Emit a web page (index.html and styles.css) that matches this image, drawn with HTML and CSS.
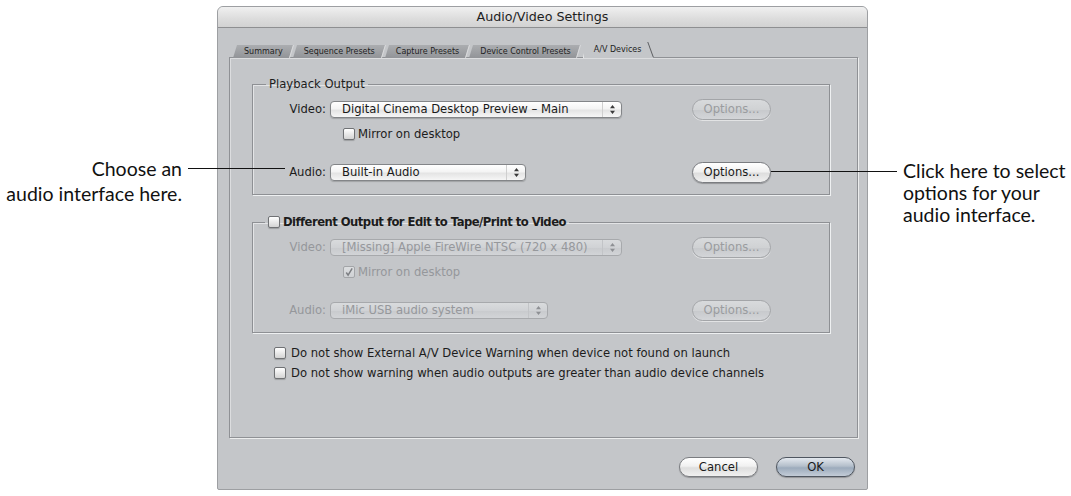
FILE: index.html
```html
<!DOCTYPE html>
<html lang="en">
<head>
<meta charset="utf-8">
<title>Audio/Video Settings</title>
<link rel="stylesheet" href="styles.css">
</head>
<body>
<div class="stage">
  <div class="window">
    <div class="titlebar">Audio/Video Settings</div>
    <div class="tabs">
      <div class="tab">Summary</div>
      <div class="tab">Sequence Presets</div>
      <div class="tab">Capture Presets</div>
      <div class="tab">Device Control Presets</div>
      <div class="tab active">A/V Devices</div>
    </div>
    <div class="pane">
      <fieldset class="group">
        <legend class="legend">Playback Output</legend>
        <div class="row">
          <span class="label">Video:</span>
          <div class="cell">
            <div class="popup w-video"><span class="popup-text">Digital Cinema Desktop Preview – Main</span><span class="stepper"><svg width="7" height="11" viewBox="0 0 7 11"><path d="M3.5 1 L6 4.2 H1Z M3.5 10 L6 6.8 H1Z" fill="#3a3a3a"/></svg></span></div>
          </div>
          <button class="btn opt disabled">Options...</button>
        </div>
        <div class="row row-check">
          <span></span>
          <div class="cell"><span class="check"><span class="box"></span>Mirror on desktop</span></div>
        </div>
        <div class="row row-last">
          <span class="label">Audio:</span>
          <div class="cell">
            <div class="popup w-audio"><span class="popup-text">Built-in Audio</span><span class="stepper"><svg width="7" height="11" viewBox="0 0 7 11"><path d="M3.5 1 L6 4.2 H1Z M3.5 10 L6 6.8 H1Z" fill="#3a3a3a"/></svg></span></div>
          </div>
          <button class="btn opt">Options...</button>
        </div>
      </fieldset>

      <fieldset class="group group-2">
        <legend class="legend legend-check"><span class="box"></span><span class="bold">Different Output for Edit to Tape/Print to Video</span></legend>
        <div class="row dim">
          <span class="label">Video:</span>
          <div class="cell">
            <div class="popup w-video off"><span class="popup-text">[Missing] Apple FireWire NTSC (720 x 480)</span><span class="stepper"><svg width="7" height="11" viewBox="0 0 7 11"><path d="M3.5 1 L6 4.2 H1Z M3.5 10 L6 6.8 H1Z" fill="#8e9094"/></svg></span></div>
          </div>
          <button class="btn opt disabled">Options...</button>
        </div>
        <div class="row row-check dim">
          <span></span>
          <div class="cell"><span class="check"><span class="box checked"><svg width="11" height="11" viewBox="0 0 11 11"><path d="M2.5 5.5 L4.5 8.5 L9 1" fill="none" stroke="#7c7e82" stroke-width="1.6"/></svg></span>Mirror on desktop</span></div>
        </div>
        <div class="row row-last dim">
          <span class="label">Audio:</span>
          <div class="cell">
            <div class="popup w-imic off"><span class="popup-text">iMic USB audio system</span><span class="stepper"><svg width="7" height="11" viewBox="0 0 7 11"><path d="M3.5 1 L6 4.2 H1Z M3.5 10 L6 6.8 H1Z" fill="#8e9094"/></svg></span></div>
          </div>
          <button class="btn opt disabled">Options...</button>
        </div>
      </fieldset>

      <div class="checks">
        <span class="check"><span class="box"></span>Do not show External A/V Device Warning when device not found on launch</span>
        <span class="check"><span class="box"></span>Do not show warning when audio outputs are greater than audio device channels</span>
      </div>
    </div>
    <div class="actions">
      <button class="btn pill">Cancel</button>
      <button class="btn pill default">OK</button>
    </div>
  </div>

  <div class="callout callout-left">Choose an<br>audio interface here.</div>
  <div class="leader leader-left"></div>
  <div class="callout callout-right">Click here to select<br>options for your<br>audio interface.</div>
  <div class="leader leader-right"></div>
</div>
</body>
</html>
```

FILE: styles.css
```css
* { box-sizing: border-box; }

html, body {
  margin: 0;
  padding: 0;
  background: #ffffff;
}

.stage {
  position: relative;
  width: 1071px;
  height: 496px;
  overflow: hidden;
  padding-top: 6px;
  font-family: "DejaVu Sans", "Liberation Sans", sans-serif;
  font-size: 11.6px;
  color: #1c1c1c;
}

/* ---------- window ---------- */
.window {
  margin-left: 217px;
  width: 651px;
  height: 484px;
  border: 1px solid #9d9fa2;
  border-radius: 6px 6px 2px 2px;
  background: #c4c6c9;
  display: flex;
  flex-direction: column;
  overflow: hidden;
}

.titlebar {
  height: 21px;
  line-height: 20px;
  border-bottom: 1px solid #8e8f91;
  background: linear-gradient(#f0f0f0, #dcdcdc 60%, #d2d2d2);
  text-align: center;
  font-size: 12.7px;
  color: #1e1e1e;
}

/* ---------- tabs ---------- */
.tabs {
  position: relative;
  z-index: 2;
  display: flex;
  align-items: flex-end;
  gap: 3px;
  height: 16px;
  margin: 14px 0 0 17px;
}

.tab {
  position: relative;
  height: 13px;
  line-height: 13px;
  padding: 0 9px;
  font-size: 8px;
  color: #1f1f1f;
  white-space: nowrap;
}

.tab::before {
  content: "";
  position: absolute;
  inset: 0;
  z-index: -1;
  background: linear-gradient(#abadb0, #929498);
  border-right: 1px solid #d9dadc;
  transform: skewX(-17deg);
}

.tab.active {
  height: 16px;
  line-height: 15px;
  margin-left: 0;
  padding: 0 12px 0 11px;
  color: #222;
}

.tab.active::before {
  background: #c4c6c9;
  border-right: none;
  border-left: 1px solid #e6e7e8;
  transform: none;
  clip-path: polygon(4px 0, calc(100% - 6px) 0, 100% 100%, 0 100%);
}

.tab.active::after {
  content: "";
  position: absolute;
  right: 2px;
  top: 0;
  width: 1px;
  height: 15px;
  background: #5d5f62;
  transform: skewX(20deg);
}

/* ---------- pane ---------- */
.pane {
  position: relative;
  z-index: 1;
  height: 381px;
  margin: -1px 9px 0 11px;
  padding: 19px 27px 0 22px;
  border: 1px solid #8f9195;
  box-shadow: 1px 1px 0 #eceded, inset 1px 1px 0 #dcdddf;
  background: #c4c6c9;
}

.group {
  margin: 0;
  min-width: 0;
  padding: 7px 0 11px 0;
  border: 1px solid #8e9094;
  box-shadow: 1px 1px 0 #eef0f1, inset 1px 1px 0 #e3e4e6;
}

.group-2 {
  margin-top: 20px;
}

.legend {
  margin-left: 13px;
  padding: 0 3px;
  line-height: 14px;
  font-size: 11.6px;
  color: #1c1c1c;
}

.legend-check {
  display: flex;
  align-items: center;
  gap: 3px;
  margin-left: 12px;
}

.bold {
  font-weight: bold;
  letter-spacing: -0.52px;
}

.row {
  display: grid;
  grid-template-columns: 73px 358px 79px;
  column-gap: 4px;
  align-items: center;
  height: 22px;
}

.row-check {
  height: 20px;
  margin-top: 4px;
}

.row-last {
  margin-top: 17px;
}

.label {
  text-align: right;
  white-space: nowrap;
}

.dim .label,
.dim .check {
  color: #95979b;
}

.cell {
  display: flex;
  align-items: center;
}

/* ---------- popup menus ---------- */
.popup {
  display: flex;
  align-items: center;
  height: 17px;
  border: 1px solid #838588;
  border-radius: 4px;
  background: linear-gradient(#ffffff, #f4f4f4 45%, #e4e4e4 55%, #f6f6f6);
  box-shadow: 0 1px 1px rgba(0, 0, 0, 0.18);
  overflow: hidden;
}

.w-video { width: 292px; }
.w-audio { width: 196px; }
.w-imic { width: 218px; }

.popup-text {
  flex: 1;
  padding-left: 11px;
  white-space: nowrap;
  line-height: 15px;
  color: #1a1a1a;
}

.stepper {
  width: 19px;
  height: 100%;
  display: flex;
  align-items: center;
  justify-content: center;
  border-left: 1px solid #cfcfcf;
}

.popup.off {
  border-color: #a7a9ac;
  background: linear-gradient(#d9dbdd, #d0d2d5 50%, #c9cbce 55%, #d2d4d7);
  box-shadow: none;
}

.popup.off .popup-text {
  color: #96989c;
}

.popup.off .stepper {
  border-left-color: #c2c4c7;
}

/* ---------- buttons ---------- */
.btn {
  font-family: inherit;
  font-size: 11.6px;
  padding: 0;
  margin: 0;
  color: #1a1a1a;
  border: 1px solid #7a7c80;
  background: linear-gradient(#ffffff, #f1f1f1 45%, #dedede 55%, #f0f0f0);
  box-shadow: 0 1px 1px rgba(0, 0, 0, 0.25);
}

.opt {
  width: 79px;
  height: 21px;
  border-radius: 11px;
}

.opt.disabled {
  color: #9a9c9f;
  border-color: #a3a5a8;
  background: linear-gradient(#d8dadc, #d0d2d4 50%, #c8cacd 55%, #d3d5d8);
  box-shadow: 0 1px 0 rgba(255, 255, 255, 0.5);
}

.actions {
  display: flex;
  justify-content: flex-end;
  gap: 18px;
  margin-top: 19px;
  padding-right: 12px;
}

.pill {
  width: 79px;
  height: 20px;
  border-radius: 10px;
}

.pill.default {
  border-color: #4f5660;
  background: linear-gradient(#e3e8ee, #b4bfcb 45%, #9cabbc 55%, #c3ccd7);
}

/* ---------- checkboxes ---------- */
.check {
  display: inline-flex;
  align-items: center;
  gap: 3px;
  white-space: nowrap;
  margin-left: 13px;
}

.box {
  display: inline-flex;
  align-items: center;
  justify-content: center;
  width: 12px;
  height: 12px;
  border: 1px solid #707275;
  border-radius: 2px;
  background: linear-gradient(#ffffff, #e9e9e9 50%, #d4d4d4);
  box-shadow: 0 1px 1px rgba(0, 0, 0, 0.2);
  flex: none;
}

.box.checked {
  border-color: #a3a5a8;
  background: linear-gradient(#dcdee0, #cfd1d4);
  box-shadow: none;
  overflow: visible;
}

.checks {
  display: flex;
  flex-direction: column;
  gap: 4px;
  margin: 12px 0 0 22px;
}

.checks .check {
  height: 16px;
  margin-left: 0;
  gap: 5px;
}

/* ---------- callouts (annotations over the screenshot) ---------- */
.callout {
  position: absolute;
  z-index: 5;
  font-family: Lato, "Open Sans", sans-serif;
  font-size: 19.5px;
  line-height: 23px;
  color: #111;
  white-space: nowrap;
}

.callout-left {
  right: 889px;
  top: 156px;
  text-align: right;
  line-height: 25px;
}

.callout-right {
  left: 903px;
  top: 160px;
  line-height: 22px;
}

.leader {
  position: absolute;
  z-index: 5;
  height: 1px;
  background: #111;
}

.leader-left {
  left: 188px;
  top: 168px;
  width: 97px;
}

.leader-right {
  left: 771px;
  top: 171px;
  width: 126px;
}
```
